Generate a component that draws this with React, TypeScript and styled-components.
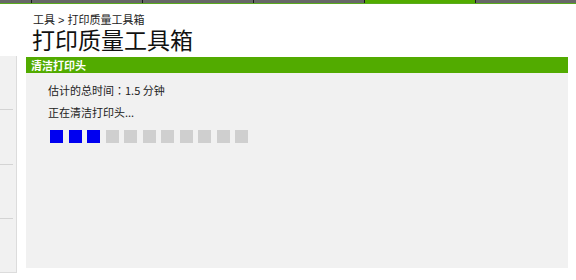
import styled, { createGlobalStyle } from "styled-components"

const GlobalStyle = createGlobalStyle`
  html, body {
    margin: 0;
    padding: 0;
    background: #fff;
  }
  body {
    font-family: "Noto Sans CJK SC", "Noto Sans", sans-serif;
    color: #222;
  }
`

const tabs = [false, false, false, true]

export default function App() {
    return (
        <Page>
            <GlobalStyle />
            <TopBar>
                <FirstStub />
                {tabs.map((active, i) => (
                    <Tab key={i} $active={active} />
                ))}
                <LastStub />
            </TopBar>
            <Body>
                <Sidebar>
                    <SideItem />
                    <SideItem />
                    <SideItem />
                    <SideItem $last />
                </Sidebar>
                <Main>
                    <Breadcrumb>工具 &gt; 打印质量工具箱</Breadcrumb>
                    <Title>打印质量工具箱</Title>
                    <Panel>
                        <PanelHeader>清洁打印头</PanelHeader>
                        <PanelBody>
                            <Line>估计的总时间<Colon>：</Colon>1.5 分钟</Line>
                            <Line>正在清洁打印头...</Line>
                            <Progress>
                                {Array.from({ length: 11 }).map((_, i) => (
                                    <Block key={i} $done={i < 3} />
                                ))}
                            </Progress>
                        </PanelBody>
                    </Panel>
                </Main>
            </Body>
        </Page>
    )
}

const Page = styled.div`
  width: 576px;
  height: 280px;
  overflow: hidden;
  background: #fff;
`
const TopBar = styled.div`
  display: flex;
  height: 3px;
  background: #676767;
  border-bottom: 1px solid #5aab1e;
`
const FirstStub = styled.div`
  width: 31px;
  flex: none;
  border-right: 1px solid #1a1a1a;
`
const LastStub = styled.div`
  flex: 1;
`
const Tab = styled.div<{ $active?: boolean }>`
  width: 110px;
  flex: none;
  background: ${p => (p.$active ? "#52ab00" : "transparent")};
  border-right: 1px solid #1a1a1a;
`
const Body = styled.div`
  display: flex;
  gap: 9px;
`
const Sidebar = styled.div`
  width: 16px;
  margin-top: 52px;
  height: 216px;
  background: #f1f1f1;
  border-right: 1px solid #dcdcdc;
  border-bottom: 1px solid #dcdcdc;
  display: flex;
  flex-direction: column;
`
const SideItem = styled.div<{ $last?: boolean }>`
  flex: 1;
  margin-right: 3px;
  border-bottom: ${p => (p.$last ? "none" : "1px solid #d4d4d4")};
`
const Main = styled.div`
  width: 542px;
  display: flex;
  flex-direction: column;
`
const Breadcrumb = styled.div`
  margin-top: 8px;
  padding-left: 7px;
  font-family: "Liberation Sans", "Noto Sans CJK SC", sans-serif;
  font-size: 11px;
  line-height: 16px;
  color: #222;
`
const Title = styled.div`
  padding-left: 6px;
  font-family: "Liberation Sans", "Noto Sans CJK SC", sans-serif;
  font-size: 23px;
  line-height: 27px;
  color: #111;
`
const Panel = styled.div`
  margin-top: 2px;
  display: flex;
  flex-direction: column;
`
const PanelHeader = styled.div`
  height: 16px;
  background: #52ab00;
  color: #fff;
  font-size: 11px;
  font-weight: bold;
  line-height: 16px;
  padding-left: 5px;
`
const PanelBody = styled.div`
  height: 185px;
  background: #f1f1f1;
  padding: 10px 22px 0;
  display: flex;
  flex-direction: column;
`
const Line = styled.div`
  font-size: 11px;
  line-height: 15px;
  color: #222;
  margin-bottom: 7px;
`
const Colon = styled.span`
  font-family: "Noto Sans CJK TC", "Noto Sans CJK SC", sans-serif;
`
const Progress = styled.div`
  display: flex;
  gap: 5.5px;
  margin-top: 3px;
  padding-left: 2px;
`
const Block = styled.div<{ $done?: boolean }>`
  width: 13px;
  height: 13px;
  background: ${p => (p.$done ? "#0000f0" : "#cfcfcf")};
`
